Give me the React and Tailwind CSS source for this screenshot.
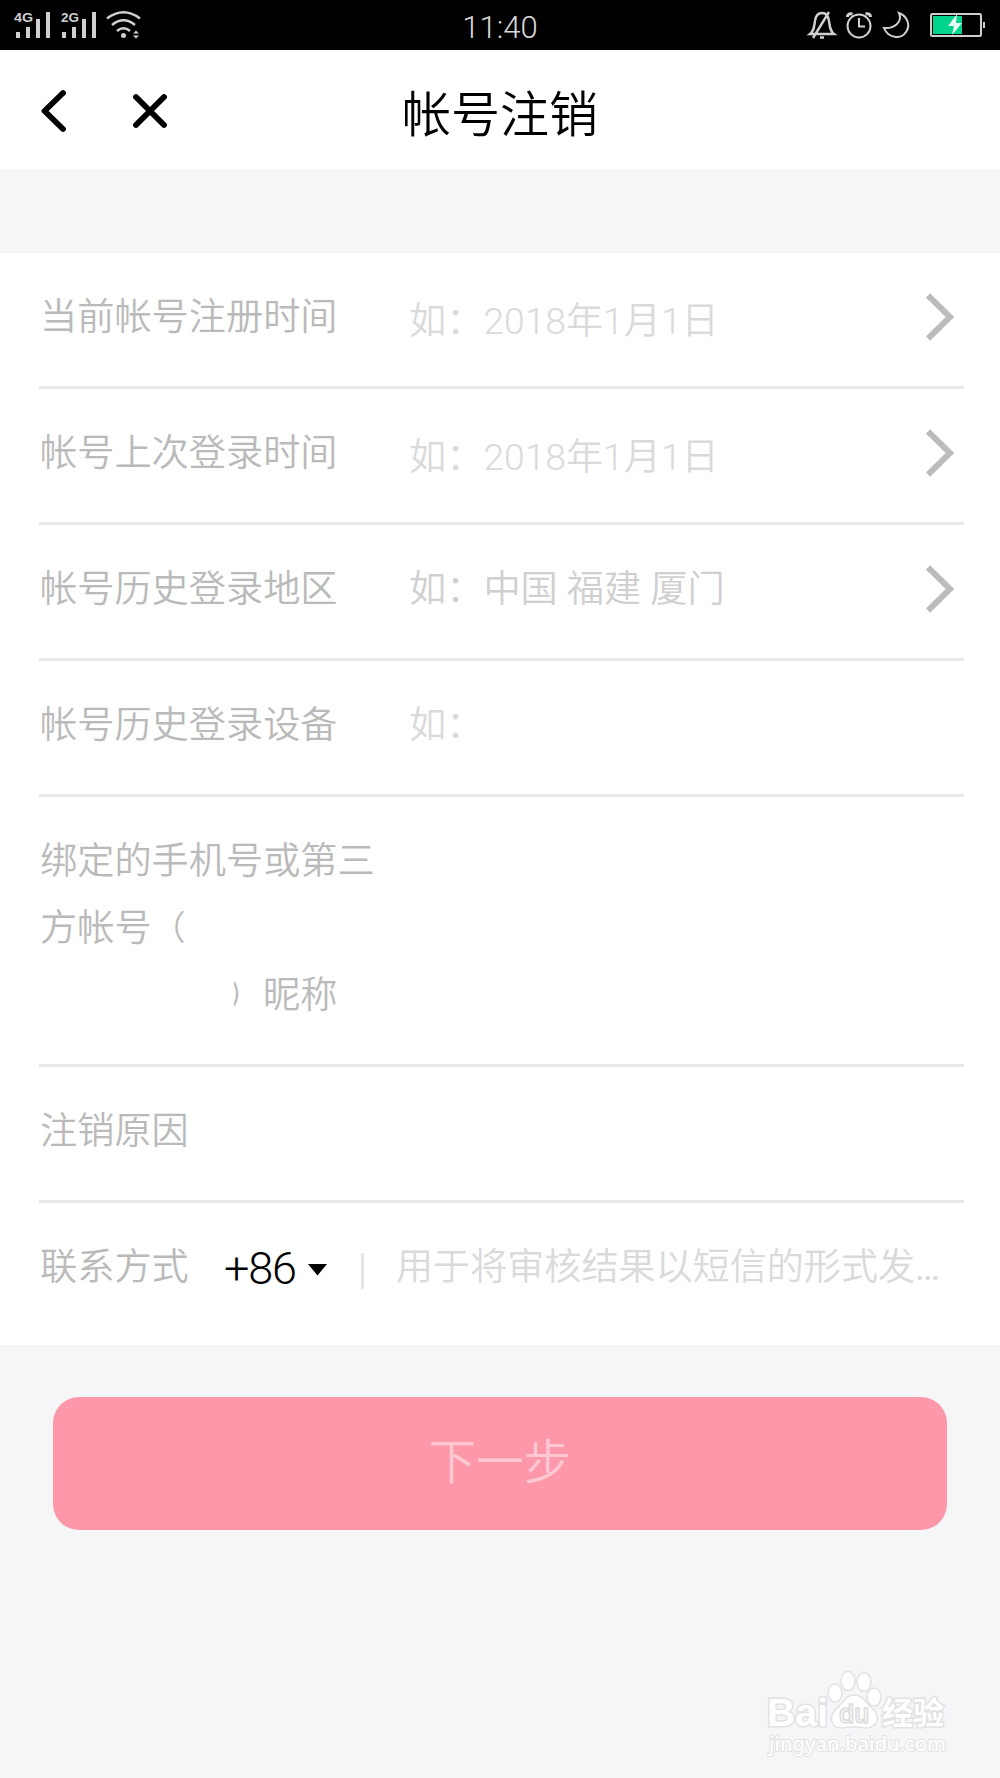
import React from "react";

const rows = [
  { label: "当前帐号注册时间", hint: "如：2018年1月1日", tone: "text-[#dadada] top-[4px]", arrow: true },
  { label: "帐号上次登录时间", hint: "如：2018年1月1日", tone: "text-[#dadada] top-[4px]", arrow: true },
  { label: "帐号历史登录地区", hint: "如：中国 福建 厦门", tone: "text-[#d0d0d0]", arrow: true },
  { label: "帐号历史登录设备", hint: "如：", tone: "text-[#dadada]" },
];

export default function App() {
  return (
    <div className="flex h-[1778px] w-[1000px] flex-col overflow-hidden bg-[#f6f6f8] font-['Roboto','Noto_Sans_CJK_SC',sans-serif] font-[350]">
      <StatusBar />
      <Header />

      <main className="mt-[83px] h-[1092px] shrink-0 bg-white pl-[39px] pr-[36px] text-[37.2px] text-[#bababa]">
        {rows.map((r) => (
          <div key={r.label} className="flex h-[136px] items-center border-b-[3px] border-[#e8e8e8] pb-[4px]">
            <span className="w-[370px] pl-px whitespace-nowrap">{r.label}</span>
            <span className={"relative flex-1 whitespace-pre " + r.tone}>{r.hint}</span>
            {r.arrow && <Arrow />}
          </div>
        ))}

        <div className="h-[270px] border-b-[3px] border-[#e8e8e8] pt-[31px] pl-px leading-[66.8px]">
          <div>绑定的手机号或第三</div>
          <div className="flex">
            <span>方帐号</span>
            <span className="text-[34px]">（</span>
          </div>
          <div className="flex pl-[186px]">
            <span className="w-[37px] pl-[2px] text-[34px] [clip-path:inset(0_0_0_8px)]">）</span>
            <span>昵称</span>
          </div>
        </div>

        <div className="flex h-[136px] items-center border-b-[3px] border-[#e8e8e8] pb-[4px] pl-px">注销原因</div>

        <div className="flex h-[136px] items-center pb-[7px] pl-px">
          <span className="w-[184px]">联系方式</span>
          <span className="relative top-px w-[84px] text-[45px] tracking-[-1.2px] text-black">+86</span>
          <svg width="19" height="12" viewBox="0 0 19 12" className="relative top-[2px]">
            <path d="M0 0H19L9.5 11.5Z" />
          </svg>
          <span className="relative top-[3px] ml-[34px] h-[36px] w-[3px] bg-[#e6e6e6]" />
          <span className="ml-[32px] whitespace-nowrap text-[37.1px] text-[#dadada]">
            用于将审核结果以短信的形式发<span className="font-normal tracking-[-2px]">...</span>
          </span>
        </div>
      </main>

      <button className="mx-[53px] mt-[52px] flex h-[133px] shrink-0 items-center justify-center rounded-[26px] bg-[#fc98aa] text-[47.5px] text-[#fdc8d1]">
        下一步
      </button>

      <Watermark />
    </div>
  );
}

function StatusBar() {
  return (
    <div className="flex h-[50px] shrink-0 items-center bg-black">
      <svg width="160" height="50" viewBox="0 0 160 50" fill="#d0d0d0" fontFamily="Liberation Sans" fontSize="13" fontWeight="bold">
        <text x="14" y="22" textLength="19" lengthAdjust="spacingAndGlyphs">4G</text>
        <path d="M16 32h4v6h-4zM26 27h4v11h-4zM36 19h4v19h-4zM46 12h4v26h-4z" />
        <text x="61" y="22" textLength="18" lengthAdjust="spacingAndGlyphs">2G</text>
        <path d="M62 32h4v6h-4zM72 27h4v11h-4zM82 19h4v19h-4zM92 12h4v26h-4z" />
        <g fill="none" stroke="#d0d0d0" strokeWidth="2.6">
          <path d="M107 18.500Q123.500 6 140 18.500M112 25Q123.500 15.500 135 25M117 31Q123.500 25.500 130 31" />
        </g>
        <circle cx="123.500" cy="35.500" r="2.500" />
        <path d="M133 33.500h6l-3-3zM133 35.500h6l-3 3z" />
      </svg>
      <div className="flex-1 text-center text-[31px] text-[#d8d8d8]">
        <span className="relative top-[3px] left-[20px]">11:40</span>
      </div>
      <svg width="200" height="50" viewBox="0 0 200 50" fill="none" stroke="#d0d0d0" strokeWidth="2">
        <path d="M10 34C14 31 14 27 15 21Q16 13 22 13Q28 13 29 21C30 27 30 31 34 34ZM13 38L29 12M20 37.500h4" strokeWidth="2.4" />
        <circle cx="59" cy="26" r="11.500" />
        <path d="M59 18v8.500h6" />
        <path d="M47.500 17q0-4 5-3M70.500 17q0-4-5-3" strokeWidth="3" />
        <path d="M99 13C103 22 94 29 84 28C88 38 101 40 106 32C111 25 107 16 99 13Z" />
        <rect x="131" y="14" width="50" height="22" rx="1.500" />
        <path d="M133 16h29v18h-29z" fill="#00d58b" stroke="none" />
        <path d="M183 22h2v6h-2z" fill="#d0d0d0" stroke="none" />
        <path d="M157 14l-9 12h6l-2 9l10-12h-6z" fill="#eafff7" stroke="none" />
      </svg>
    </div>
  );
}

function Header() {
  return (
    <header className="relative -mb-px flex h-[121px] shrink-0 items-center border-b border-[#efefef] bg-white pl-[41px]">
      <svg width="26" height="44" viewBox="0 0 26 44" fill="none" stroke="#000" strokeWidth="5.8" strokeLinecap="round" strokeLinejoin="round" className="relative top-[1px]">
        <path d="M22 4L3.500 22L22 40" />
      </svg>
      <svg width="36" height="36" viewBox="0 0 36 36" fill="none" stroke="#000" strokeWidth="5.8" strokeLinecap="round" className="relative top-[1px] ml-[65px]">
        <path d="M4 4L32 32M32 4L4 32" />
      </svg>
      <h1 className="absolute inset-x-0 top-[30px] text-center text-[49px] leading-[72px] text-black">帐号注销</h1>
    </header>
  );
}

function Arrow() {
  return (
    <svg width="30" height="48" viewBox="0 0 30 48" fill="none" stroke="#bcbcbc" strokeWidth="6" className="relative -top-px mr-[8px]">
      <path d="M2 2.500L24 24L2 45.500" />
    </svg>
  );
}

// paw logo over the bottom right corner
function Watermark() {
  return (
    <svg width="200" height="110" viewBox="0 0 200 110" className="mt-auto mr-[38px] mb-[8px] shrink-0 self-end" fill="#fff" stroke="#e2e2e4" strokeWidth="1.500">
      <text x="5" y="66" fontFamily="Liberation Sans" fontWeight="700" fontSize="39" textLength="61" paintOrder="stroke" strokeWidth="3">Bai</text>
      <ellipse cx="73" cy="33" rx="7" ry="9" />
      <ellipse cx="86" cy="21" rx="7" ry="9.500" />
      <ellipse cx="102" cy="22" rx="7" ry="9.500" />
      <ellipse cx="112" cy="37" rx="7" ry="9" />
      <path d="M92 35C101 35 104 43 111 49C120 59 114 68 103 68Q92 66 81 68C69 69 66 57 74 49C81 44 83 35 92 35Z" />
      <text x="77" y="63" fontFamily="Inter" fontWeight="600" fontSize="26" textLength="30" lengthAdjust="spacingAndGlyphs" fill="#f6f6f8" stroke="#dcdcde">du</text>
      <text x="120" y="64" fontFamily="Noto Sans CJK SC" fontWeight="700" fontSize="31" paintOrder="stroke" strokeWidth="3">经验</text>
      <text x="7" y="91" fontFamily="Noto Sans" fontWeight="500" fontSize="20" textLength="177" paintOrder="stroke" strokeWidth="2">jingyan.baidu.com</text>
    </svg>
  );
}
